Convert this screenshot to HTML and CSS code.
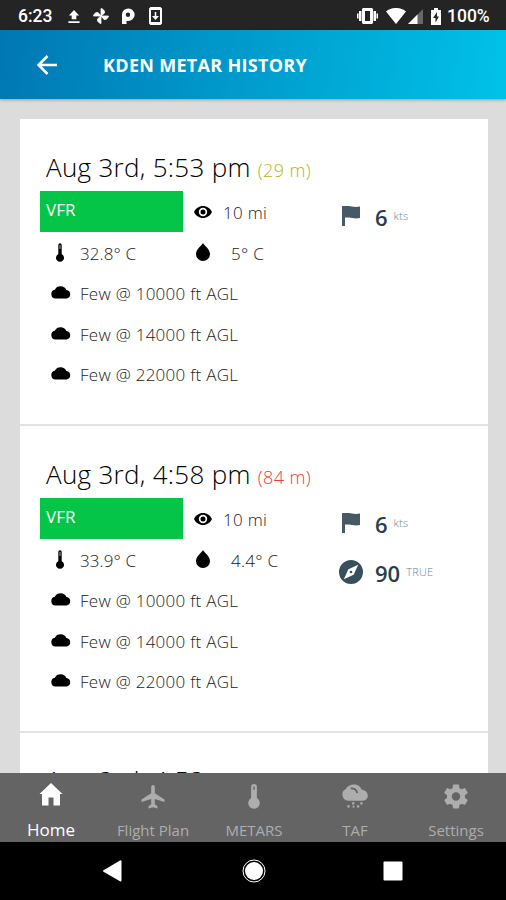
FILE: index.html
```html
<!DOCTYPE html>
<html lang="en">
<head>
<meta charset="utf-8">
<title>KDEN METAR History</title>
<link rel="stylesheet" href="styles.css">
</head>
<body>
<svg class="defs" aria-hidden="true">
  <symbol id="flag" viewBox="0 0 18 20"><path d="M0 0h3c3-.4 5 .1 7 .6s5 .6 8 0v11.400c-3 .6-5 .4-8 0s-4-.8-7-.4V20H0z"/></symbol>
  <symbol id="compass" viewBox="2 2 20 20"><path fill-rule="evenodd" d="M12 2a10 10 0 1 0 0 20 10 10 0 0 0 0-20zm2.200 12.200L6 18l3.800-8.200L18 6zM12 10.900a1.100 1.100 0 1 0 0 2.200 1.100 1.100 0 0 0 0-2.200z"/></symbol>
  <symbol id="eye" viewBox="0 0 18 12"><path fill-rule="evenodd" d="M9 0C5 0 1.600 2.500 0 6c1.600 3.500 5 6 9 6s7.400-2.500 9-6c-1.600-3.500-5-6-9-6zm0 1.800a4.200 4.200 0 1 1 0 8.400 4.200 4.200 0 0 1 0-8.400zM9 3.500a2.500 2.500 0 1 0 0 5 2.500 2.500 0 0 0 0-5z"/></symbol>
  <symbol id="drop" viewBox="0 0 16 18"><path d="M8 0c1 2.500 7 6 7 11a7 7 0 0 1-14 0C1 6 7 2.500 8 0z"/></symbol>
  <symbol id="thermo" viewBox="0 0 10 19"><path d="M3.300 2a1.700 1.700 0 0 1 3.400 0v9.200a4 4 0 1 1-3.400 0z"/><path d="M5 2v4" stroke="#aaa" stroke-width="1"/></symbol>
  <symbol id="cloud" viewBox="0 0 20 14"><path d="M4.500 13.500a4.400 4.400 0 0 1-.7-8.700A6.500 6.500 0 0 1 15.400 5a4.300 4.300 0 0 1 .3 8.500z"/></symbol>
</svg>

<div class="statusbar">
  <span class="clock">6:23</span>
  <svg class="s-up" viewBox="0 0 12 14"><path d="M6 0l5.500 6H8.500v4h-5V6H.5zM0 12h12v2H0z"/></svg>
  <svg class="s-fan" viewBox="0 0 16 16"><path stroke="#fff" stroke-width=".8" d="M8 8V0.500C10 1 12 2.500 11.500 5L8 8h7.500c-.5 2-2 4-4.500 3.500L8 8v7.500C6 15 4 13.500 4.500 11L8 8H.5C1 6 2.500 4 5 4.500z"/></svg>
  <svg class="s-p" viewBox="0 0 14 16"><path fill-rule="evenodd" d="M1 16V6.500a6.300 6.300 0 1 1 6 6.500H5.500v3zM7 4.500a2.200 2.200 0 1 0 0 4.400 2.200 2.200 0 0 0 0-4.400z"/></svg>
  <svg class="s-dl" viewBox="0 0 13 18"><path fill-rule="evenodd" d="M1.500 0h10L13 1.500v15L11.500 18h-10L0 16.500v-15zM2 3v12h9V3zm3.700 2h1.600v4H10l-3.500 4L3 9h2.700z"/></svg>
  <span class="grow"></span>
  <svg class="s-vib" viewBox="0 0 21 16"><path fill-rule="evenodd" d="M6 0h9l1 1v14l-1 1H6l-1-1V1zM8 3v10h5V3zM2 3h2.500v10H2zM16.500 3H19v10h-2.500zM0 5.500h1.500v5H0zM19.500 5.500H21v5h-1.500z"/></svg>
  <svg class="s-wifi" viewBox="0 0 20 16"><path d="M0 3.500C5.500-1.200 14.500-1.200 20 3.500L10 16z"/></svg>
  <svg class="s-cell" viewBox="0 0 15 15"><path opacity=".3" d="M15 0v15H0z"/><path d="M9.500 5.500V15H0z"/></svg>
  <svg class="s-bat" viewBox="0 0 10 17"><path fill-rule="evenodd" d="M3 0h4v2h3v15H0V2h3zm3 4L2 10h2.500v4.500L8 8.500H6z"/></svg>
  <span class="pct">100%</span>
</div>

<header class="appbar">
  <svg class="back" viewBox="0 0 20 20"><path d="M20 10H2M10.500 1L1.500 10l9 9"/></svg>
  <h1>KDEN METAR HISTORY</h1>
</header>

<main class="content">
  <article class="report">
    <h2>Aug 3rd, 5:53 pm <small class="age-ok">(29 m)</small></h2>
    <div class="body">
      <div class="left">
        <div class="row"><span class="rules">VFR</span><svg class="i-eye"><use href="#eye"/></svg><span class="val vis">10 mi</span></div>
        <div class="row"><svg class="i-thermo"><use href="#thermo"/></svg><span class="val temp">32.8° C</span><svg class="i-drop"><use href="#drop"/></svg><span class="val dew">5° C</span></div>
        <div class="row"><svg class="i-cloud"><use href="#cloud"/></svg><span class="val">Few @ 10000 ft AGL</span></div>
        <div class="row"><svg class="i-cloud"><use href="#cloud"/></svg><span class="val">Few @ 14000 ft AGL</span></div>
        <div class="row"><svg class="i-cloud"><use href="#cloud"/></svg><span class="val">Few @ 22000 ft AGL</span></div>
      </div>
      <div class="wind">
        <div class="wrow"><span class="wicon"><svg class="i-flag"><use href="#flag"/></svg></span><b>6</b><span class="unit">kts</span></div>
      </div>
    </div>
  </article>
  <article class="report">
    <h2>Aug 3rd, 4:58 pm <small class="age-old">(84 m)</small></h2>
    <div class="body">
      <div class="left">
        <div class="row"><span class="rules">VFR</span><svg class="i-eye"><use href="#eye"/></svg><span class="val vis">10 mi</span></div>
        <div class="row"><svg class="i-thermo"><use href="#thermo"/></svg><span class="val temp">33.9° C</span><svg class="i-drop"><use href="#drop"/></svg><span class="val dew">4.4° C</span></div>
        <div class="row"><svg class="i-cloud"><use href="#cloud"/></svg><span class="val">Few @ 10000 ft AGL</span></div>
        <div class="row"><svg class="i-cloud"><use href="#cloud"/></svg><span class="val">Few @ 14000 ft AGL</span></div>
        <div class="row"><svg class="i-cloud"><use href="#cloud"/></svg><span class="val">Few @ 22000 ft AGL</span></div>
      </div>
      <div class="wind">
        <div class="wrow"><span class="wicon"><svg class="i-flag"><use href="#flag"/></svg></span><b>6</b><span class="unit">kts</span></div>
        <div class="wrow"><span class="wicon"><svg class="i-compass"><use href="#compass"/></svg></span><b>90</b><span class="unit">TRUE</span></div>
      </div>
    </div>
  </article>
  <article class="report next">
    <h2>Aug 3rd, 4:53 pm</h2>
  </article>
</main>

<nav class="tabs">
  <a class="tab active"><svg viewBox="0 0 24 24"><path d="M12 .5L23.500 11.500H21V23h-6.500v-8h-5v8H3V11.500H.5z"/></svg>Home</a>
  <a class="tab"><svg viewBox="0 0 24 24"><path d="M10.200 2.200a1.800 1.800 0 0 1 3.600 0v6.600L23.500 15v2.400l-9.700-3v5.300l2.700 2V24L12 22.800 7.500 24v-2.300l2.700-2v-5.300l-9.700 3V15l9.700-6.200z"/></svg>Flight Plan</a>
  <a class="tab"><svg viewBox="0 0 24 26"><path fill-rule="evenodd" d="M9 3a3 3 0 0 1 6 0v11.500a6 6 0 1 1-6 0zM11.300 2.500v3.500h1.400V2.500z"/></svg>METARS</a>
  <a class="tab"><svg class="wide" viewBox="0 0 28 26"><path d="M7 17.500A6.500 6.500 0 0 1 4.500 5.200C7.500-1 18.500-1.500 21 6c8 .5 8.500 11.500 1 11.500z"/><path d="M9.500 4.500c3.500-.3 6 1.500 7 5" fill="none" stroke="#646464" stroke-width="1.800"/><path d="M11 19h2.400v2.400H11zM19.500 19h2.400v2.400h-2.400zM6 22h2.400v2.400H6zM11.500 22.500h2v2h-2zM16 22h2.400v2.400H16z"/></svg>TAF</a>
  <a class="tab"><svg viewBox="2 2 20 20"><path d="M19.430 12.980c.04-.32.070-.64.070-.98s-.03-.66-.07-.98l2.110-1.650c.19-.15.24-.42.120-.64l-2-3.460c-.12-.22-.39-.3-.61-.22l-2.490 1c-.52-.4-1.080-.73-1.690-.98l-.38-2.650C14.460 2.180 14.250 2 14 2h-4c-.25 0-.46.180-.49.420l-.38 2.650c-.61.250-1.170.590-1.690.980l-2.490-1c-.23-.09-.49 0-.61.220l-2 3.460c-.13.220-.07.490.12.640l2.110 1.650c-.04.320-.07.650-.07.980s.03.660.07.980l-2.110 1.650c-.19.150-.24.420-.12.640l2 3.460c.12.220.39.300.61.220l2.490-1c.52.400 1.080.730 1.690.980l.38 2.650c.03.240.24.420.49.420h4c.25 0 .46-.18.490-.42l.38-2.650c.61-.25 1.170-.59 1.690-.98l2.490 1c.23.090.49 0 .61-.22l2-3.460c.12-.22.070-.49-.12-.64zM12 15.500a3.500 3.500 0 1 1 0-7 3.500 3.500 0 0 1 0 7z"/></svg>Settings</a>
</nav>

<div class="sysnav">
  <svg viewBox="0 0 24 24"><path d="M19.500 2v19.500a1 1 0 0 1-1.500.8L1.500 12.800a1 1 0 0 1 0-1.600L18 1.500a1 1 0 0 1 1.500.5z"/></svg>
  <svg viewBox="0 0 24 24"><circle cx="12" cy="12" r="9"/><circle class="ring" cx="12" cy="12" r="11"/></svg>
  <svg viewBox="0 0 24 24"><rect x="2.500" y="2.500" width="19" height="19" rx="1"/></svg>
</div>
</body>
</html>
```
FILE: styles.css
```css
* { box-sizing: border-box; }
body {
  margin: 0;
  width: 506px;
  height: 900px;
  overflow: hidden;
  display: flex;
  flex-direction: column;
  background: #dcdcdc;
  font-family: "Open Sans", sans-serif;
}
svg { display: block; flex: none; fill: currentColor; }
.defs { position: absolute; width: 0; height: 0; }

.statusbar {
  height: 30px;
  flex: none;
  display: flex;
  align-items: center;
  padding: 2px 16px 0 18px;
  background: #242424;
  color: #fff;
  font: 500 17.500px/28px Roboto, sans-serif;
}
.clock { width: 50px; }
.grow { flex: 1; }
.s-up { width: 12px; height: 13px; margin-right: 13px; }
.s-fan { width: 16px; height: 16px; margin-right: 12px; }
.s-p { width: 14px; height: 16px; margin-right: 14px; }
.s-dl { width: 13px; height: 18px; }
.s-vib { width: 21px; height: 16px; margin-right: 8px; }
.s-wifi { width: 20px; height: 16px; margin-right: 2px; }
.s-cell { width: 15px; height: 15px; margin-right: 8px; }
.s-bat { width: 10px; height: 17px; margin-right: 6px; }
.pct { width: 43px; white-space: nowrap; }

.appbar {
  height: 69px;
  flex: none;
  display: flex;
  align-items: center;
  padding-left: 37px;
  background: linear-gradient(100deg, #0077b3 0%, #00c2e8 100%);
  box-shadow: 0 1px 3px rgba(0, 0, 0, .3);
  color: #fff;
}
.back { width: 20px; height: 20px; margin-right: 46px; fill: none; stroke: #fff; stroke-width: 2.500; }
.appbar h1 { margin: 0; font-size: 18px; font-weight: 700; letter-spacing: .3px; white-space: nowrap; }

.content { flex: 1; min-height: 0; overflow: hidden; padding: 20px 18px 0 20px; }
.report { height: 307px; padding: 24px 20px 0; background: #fff; border-bottom: 2px solid #e3e3e3; color: #000; }
.report.next { padding-top: 23px; }
.report h2 {
  margin: 0;
  height: 48px;
  padding-left: 6px;
  font-size: 26px;
  line-height: 48px;
  font-weight: 300;
  letter-spacing: .3px;
  white-space: nowrap;
}
.report small { font-size: 18px; letter-spacing: .4px; }
.age-ok { color: #b5b523; }
.age-old { color: #f2383c; }
.body { display: flex; }
.left { width: 298px; }
.row { height: 40.400px; display: flex; align-items: center; }
.rules { width: 143px; height: 41px; flex: none; padding: 7px 6px; background: #05c548; color: #fff; font-size: 17px; line-height: 24px; }
.val { font-size: 17px; font-weight: 300; line-height: 24px; padding-top: 5px; letter-spacing: .27px; white-space: nowrap; color: #222; }
.i-eye { width: 18px; height: 12px; margin: 1px 0 0 11px; }
.vis { margin-left: 11px; padding-top: 4px; }
.i-thermo { width: 10px; height: 19px; margin: 1px 0 0 15px; }
.temp { width: 115px; margin-left: 15px; letter-spacing: .1px; }
.i-drop { width: 16px; height: 18px; margin-top: 1px; }
.dew { margin-left: 20px; }
.i-cloud { width: 20px; height: 14px; margin: 1px 9px 0 11px; }

.wrow { height: 49px; display: flex; align-items: center; color: #263f4c; }
.wicon { width: 25px; margin-right: 12px; display: flex; justify-content: center; }
.i-flag { width: 18px; height: 20px; color: #455a66; }
.i-compass { width: 24px; height: 24px; color: #37505d; }
.wrow b { font-size: 22px; font-weight: 600; line-height: 30px; padding-top: 2px; }
.unit { margin-left: 6px; font-size: 11px; font-weight: 300; letter-spacing: .2px; color: #70858f; }

.tabs { height: 69px; flex: none; display: grid; grid-template-columns: repeat(5, 1fr); padding-left: 1px; background: #646464; }
.tab { display: flex; flex-direction: column; align-items: center; padding: 11px 0 0 1px; font-size: 15px; line-height: 22px; color: #adadad; white-space: nowrap; }
.tab svg { width: 24px; height: 25px; margin-bottom: 10px; }
.tab svg.wide { width: 28px; }
.tab.active { color: #fff; font-size: 17px; padding: 9px 1px 0 0; }
.tab.active svg { margin-bottom: 12px; }

.sysnav { height: 58px; flex: none; display: flex; align-items: center; justify-content: space-between; padding: 0 101px 0 102px; background: #000; color: #fff; }
.sysnav svg { width: 24px; height: 24px; }
.ring { fill: none; stroke: #fff; stroke-width: 1; }
```
